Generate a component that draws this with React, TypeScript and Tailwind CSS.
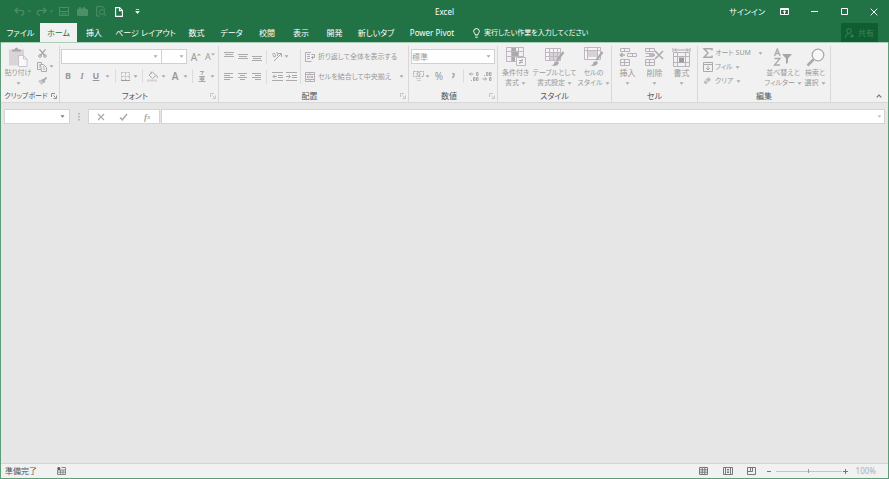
import type { ReactNode } from "react";

type BoxProps = { className?: string; children?: ReactNode };

function Icon({ w, h, className = "", children }: BoxProps & { w: number; h: number }) {
  return (
    <svg
      width={w}
      height={h}
      viewBox={`0 0 ${w} ${h}`}
      fill="none"
      stroke="currentColor"
      strokeWidth="1"
      className={`shrink-0 ${className}`}
      aria-hidden="true"
    >
      {children}
    </svg>
  );
}

function Caret({ className = "opacity-70" }: { className?: string }) {
  return (
    <Icon w={5} h={3} className={className}>
      <path d="M.5 .3h4L2.5 2.7z" fill="currentColor" stroke="none" />
    </Icon>
  );
}

function Tool({ label, className = "", children }: BoxProps & { label: string }) {
  return (
    <button type="button" aria-label={label} className={`flex h-3.5 shrink-0 items-center justify-center ${className}`}>
      {children}
    </button>
  );
}

function Rule({ className = "h-3.5" }: { className?: string }) {
  return <span className={`w-px shrink-0 bg-[#dcdcdc] ${className}`} />;
}

function Group({ title, launcher, className = "", titleClass = "", children }: BoxProps & { title: string; launcher?: string; titleClass?: string }) {
  return (
    <section aria-label={title} className={`flex shrink-0 flex-col pt-[3px] ${className}`}>
      <div className="flex h-11 border-r border-[#d8d8d8]">{children}</div>
      <div className="flex h-3 items-center border-r border-[#d8d8d8] text-[#555]">
        <h2 className={`flex-1 text-center whitespace-nowrap ${titleClass}`}>{title}</h2>
        {launcher && (
          <button type="button" aria-label={`${title}の設定`} className={`pr-0.5 ${launcher}`}>
            <Icon w={6} h={6}>
              <path d="M.5 4V.5H4M2.5 2.5l2 2M5.5 2.5v3h-3" />
            </Icon>
          </button>
        )}
      </div>
    </section>
  );
}

function BigButton({ icon, lines, className = "" }: { icon: ReactNode; lines: string[]; className?: string }) {
  return (
    <button type="button" className={`flex shrink-0 flex-col items-center whitespace-nowrap ${className}`}>
      <span className="flex h-[22px] items-center">{icon}</span>
      <span className="leading-[10px]">{lines[0]}</span>
      <span className="flex h-[10px] items-center gap-0.5 leading-[10px]">
        {lines[1]}
        <Caret />
      </span>
    </button>
  );
}

function Lines({ d }: { d: string }) {
  return (
    <Icon w={10} h={9}>
      <path d={d} />
    </Icon>
  );
}

const tabs = [
  { name: "挿入", width: "w-[34px]" },
  { name: "ページ レイアウト", width: "w-[69px]" },
  { name: "数式", width: "w-[33px]" },
  { name: "データ", width: "w-[37px]" },
  { name: "校閲", width: "w-[34px]" },
  { name: "表示", width: "w-[34px]" },
  { name: "開発", width: "w-[33px]" },
  { name: "新しいタブ", width: "w-[50px]" },
  { name: "Power Pivot", width: "w-[62px]" },
];

function TitleBar() {
  return (
    <header className="grid h-[23px] grid-cols-[1fr_auto_1fr] items-center text-white">
      <div className="flex items-center text-[#4d8f6b]">
        <Tool label="元に戻す" className="ml-2.5 w-4">
          <Icon w={11} h={9}>
            <path d="M4 .8 1 3.5 4 6.200M1.200 3.500H7.500Q10 3.700 9.800 5.800 9.500 8 7 8.400" strokeWidth="1.200" />
          </Icon>
        </Tool>
        <Caret />
        <Tool label="やり直し" className="ml-px w-4">
          <Icon w={11} h={9}>
            <path d="M7 .8 10 3.500 7 6.200M9.800 3.500H3.500Q1 3.700 1.200 5.800 1.500 8 4 8.400" strokeWidth="1.200" />
          </Icon>
        </Tool>
        <Caret />
        <Tool label="上書き保存" className="ml-0.5 w-4">
          <Icon w={10} h={9}>
            <path d="M.5.5h9v8h-9zM1 4.500h8M3 8.500v-2h4v2" />
          </Icon>
        </Tool>
        <Tool label="開く" className="ml-0.5 w-4">
          <Icon w={11} h={9}>
            <path d="M.5 2.500h10v6H.5zM2 2V.8h2V2M6 2V.8h2V2" fill="currentColor" />
          </Icon>
        </Tool>
        <Tool label="印刷プレビュー" className="ml-[3px] w-4">
          <Icon w={11} h={11}>
            <path d="M4 10H.7V.6h5.800l2 2v1M8 8l2.500 2.500" />
            <circle cx="6" cy="6" r="2.500" />
          </Icon>
        </Tool>
        <Tool label="新規作成" className="ml-0.5 w-4 text-white">
          <Icon w={8} h={10}>
            <path d="M.6.6h4L7.400 3.400v6H.6zM4.500.6v3h3" strokeWidth="1.100" />
          </Icon>
        </Tool>
        <Tool label="クイック アクセス ツール バーのカスタマイズ" className="ml-0.5 w-4 text-white">
          <Icon w={5} h={5}>
            <path d="M.8.5h3.400M.7 2.500h3.600L2.500 4.500z" fill="currentColor" strokeWidth=".7" />
          </Icon>
        </Tool>
      </div>
      <h1>Excel</h1>
      <div className="flex items-center justify-end">
        <button type="button" className="mr-1 whitespace-nowrap">サインイン</button>
        <Tool label="リボンの表示オプション" className="w-[30px]">
          <Icon w={9} h={7}>
            <path d="M.5.5h8v6h-8zM.5 1.500h8M4.500 6V3M3 4.200 4.500 2.800 6 4.200" />
          </Icon>
        </Tool>
        <Tool label="最小化" className="w-[30px]">
          <Icon w={7} h={7}><path d="M0 3.500h7" /></Icon>
        </Tool>
        <Tool label="元のサイズに戻す" className="w-[30px]">
          <Icon w={7} h={7}><path d="M.5.5h6v6h-6z" /></Icon>
        </Tool>
        <Tool label="閉じる" className="w-[29px]">
          <Icon w={8} h={8}><path d="m.7.7 6.600 6.600m0-6.600L.7 7.300" /></Icon>
        </Tool>
      </div>
    </header>
  );
}

function TabStrip() {
  return (
    <nav className="flex h-[19px] items-stretch text-white">
      <button type="button" className="w-[39px] shrink-0 whitespace-nowrap">ファイル</button>
      <button type="button" className="w-[37px] shrink-0 bg-[#f1f1f1] whitespace-nowrap text-[#217346]">ホーム</button>
      {tabs.map((tab) => (
        <button key={tab.name} type="button" className={`shrink-0 whitespace-nowrap ${tab.width}`}>
          {tab.name}
        </button>
      ))}
      <button type="button" className="ml-2.5 flex shrink-0 items-center gap-1 text-[7px] whitespace-nowrap">
        <Icon w={7} h={10}>
          <path d="M2.200 7V5.800Q.6 4.700.6 3.300.8.6 3.500.6q2.700 0 2.900 2.700 0 1.400-1.600 2.500V7zM2.300 9.200h2.400" />
        </Icon>
        実行したい作業を入力してください
      </button>
      <button type="button" className="mr-2.5 ml-auto flex w-[37px] items-center justify-center gap-1 bg-[#0f5e32] text-[#3f8059]">
        <Icon w={9} h={10}>
          <circle cx="4" cy="3" r="2.400" />
          <path d="M.6 9.500Q.6 6 3.500 5.700M5 8h4M7 6v4" />
        </Icon>
        共有
      </button>
    </nav>
  );
}

function ClipboardGroup() {
  return (
    <Group title="クリップボード" launcher="text-[#777]" titleClass="text-[7px]" className="w-[59px]">
      <BigButton
        className="w-[34px] text-[7px]"
        lines={["貼り付け", ""]}
        icon={
          <Icon w={20} h={20}>
            <path d="M1 2.500h15v16H1z" fill="#d3cdd3" stroke="none" />
            <path d="M4 4.500v-2h2.500Q7 .5 8.500.5t2 2H13v2z" fill="#999" stroke="none" />
            <path d="M10.500 8.500h5l3.500 3.500v7.500h-8.500z" fill="#fafafa" stroke="#c2b8c7" />
            <path d="M15.500 8.500V12H19" stroke="#c2b8c7" />
          </Icon>
        }
      />
      <div className="flex w-3.5 flex-col items-center">
        <Tool label="切り取り" className="w-3.5 text-[#8c8c8c]">
          <Icon w={9} h={9}>
            <path d="m1.500.3 5 6M7.500.3l-5 6" strokeWidth="1.200" />
            <circle cx="2" cy="7" r="1.300" />
            <circle cx="7" cy="7" r="1.300" />
          </Icon>
        </Tool>
        <Tool label="コピー" className="w-3.5">
          <Icon w={10} h={10}>
            <path d="M4 7.500H.5v-7h4v2M3.500 2.500h3l3 3v4h-5zM6 5h1.500M6 7h2M2 3h1M2 5h1" />
          </Icon>
        </Tool>
        <Tool label="書式のコピー" className="w-3.5">
          <Icon w={10} h={9}>
            <path d="m1 4 3-1.500L7 5.500 4.500 8z" fill="#c2bcc2" stroke="none" />
            <path d="m5 2.500 2.800 2.800M6.500 3.500 9.500.5" strokeWidth="1.800" />
          </Icon>
        </Tool>
      </div>
      <Caret className="mt-[19px] opacity-70" />
    </Group>
  );
}

function FontGroup() {
  return (
    <Group title="フォント" launcher="text-[#bbb]" className="w-[159px]">
      <div className="flex flex-col gap-[5px] pt-[3px] pl-px">
        <div className="flex items-center">
          <div className="flex h-[15px] w-[101px] items-center border border-[#d0d0d0] bg-white pr-[3px]">
            <input aria-label="フォント名" className="w-0 flex-1" />
            <Caret />
          </div>
          <div className="flex h-[15px] w-[25px] items-center border border-l-0 border-[#d0d0d0] bg-white pr-0.5">
            <input aria-label="フォント サイズ" className="w-0 flex-1" />
            <Caret />
          </div>
          <Tool label="フォント サイズの拡大" className="ml-0.5 w-3.5 text-[10px]">
            A<Icon w={4} h={8}><path d="M0 2.500 2 .5l2 2z" fill="currentColor" stroke="none" /></Icon>
          </Tool>
          <Tool label="フォント サイズの縮小" className="w-3.5 text-[9px]">
            A<Icon w={4} h={8}><path d="M0 .5h4l-2 2z" fill="currentColor" stroke="none" /></Icon>
          </Tool>
        </div>
        <div className="flex items-center text-[9px]">
          <Tool label="太字" className="w-3.5 font-bold">B</Tool>
          <Tool label="斜体" className="w-3.5 font-['Liberation_Serif',serif] font-bold italic">I</Tool>
          <Tool label="下線" className="w-3.5 font-bold underline">U</Tool>
          <Caret className="ml-0.5 opacity-70" />
          <Rule className="mr-1 ml-[5px] h-3.5" />
          <Tool label="罫線" className="w-2.5 text-[#b3a8b6]">
            <Icon w={9} h={9}>
              <path d="M.5.5h8v8h-8zM4.500.5v8M.5 4.500h8" strokeDasharray="2 1" />
              <path d="M0 8.500h9" stroke="#888" />
            </Icon>
          </Tool>
          <Caret className="ml-[3px] opacity-70" />
          <Rule className="mx-1 h-3.5" />
          <Tool label="塗りつぶしの色" className="w-3">
            <Icon w={12} h={11}>
              <path d="m2 4 3.500-3L9 4.500 5.500 7.500zM4 3V.5M9 4q2 1 1.500 3" />
              <path d="M0 9.500h10" stroke="#d0cbd0" strokeWidth="2" />
            </Icon>
          </Tool>
          <Caret className="ml-0.5 opacity-70" />
          <Tool label="フォントの色" className="ml-[3px] w-3 text-[10px] font-semibold">A</Tool>
          <Caret className="ml-0.5 opacity-70" />
          <Rule className="mx-1 h-3.5" />
          <Tool label="ふりがなの表示" className="w-2.5">
            <Icon w={8} h={11}>
              <path d="M2 .5h4L4 2v2M1 5.500h6M2 7h4v1.500H2zM3.500 5.500v5M5 5.500v5M.5 10.500h7" />
            </Icon>
          </Tool>
          <Caret className="ml-[3px] opacity-70" />
        </div>
      </div>
    </Group>
  );
}

function AlignmentGroup() {
  return (
    <Group title="配置" launcher="text-[#bbb]" className="w-[190px]">
      <div className="flex w-[81px] flex-col gap-[5px] pt-[3px] pl-[3px]">
        <div className="flex h-[15px] items-center">
          <Tool label="上揃え" className="w-3.5"><Lines d="M0 .5h10M1 2.500h8M0 4.500h10" /></Tool>
          <Tool label="上下中央揃え" className="w-3.5"><Lines d="M0 2.500h10M1 4.500h8M0 6.500h10" /></Tool>
          <Tool label="下揃え" className="w-3.5"><Lines d="M0 4.500h10M1 6.500h8M0 8.500h10" /></Tool>
          <Rule className="mr-[3px] ml-0.5 h-3.5" />
          <Tool label="方向" className="w-3.5">
            <Icon w={12} h={11}>
              <path d="m3 10 7-7M7 2.500h3.500V6" />
              <path d="M1 3.500 3 2l2 3-2 1-1-2M5.500 1 7 4l-1 1" />
            </Icon>
          </Tool>
          <Caret />
        </div>
        <div className="flex h-[15px] items-center">
          <Tool label="左揃え" className="w-3.5"><Lines d="M0 1.500h9M0 3.500h6M0 5.500h9M0 7.500h6" /></Tool>
          <Tool label="中央揃え" className="w-3.5"><Lines d="M0 1.500h9M2 3.500h5M0 5.500h9M2 7.500h5" /></Tool>
          <Tool label="右揃え" className="w-3.5"><Lines d="M0 1.500h9M3 3.500h6M0 5.500h9M3 7.500h6" /></Tool>
          <Rule className="mr-[3px] ml-0.5 h-3.5" />
          <Tool label="インデントを減らす" className="w-3.5">
            <Icon w={11} h={9}><path d="M0 .5h11M6 3.500h5M6 5.500h5M0 8.500h11M1 4.500h4M3 2.500l-2 2 2 2" /></Icon>
          </Tool>
          <Tool label="インデントを増やす" className="w-3.5">
            <Icon w={11} h={9}><path d="M0 .5h11M6 3.500h5M6 5.500h5M0 8.500h11M0 4.500h4M2.500 2.500l2 2-2 2" /></Icon>
          </Tool>
        </div>
      </div>
      <Rule className="mt-[3px] h-[35px]" />
      <div className="flex flex-1 flex-col gap-[5px] pt-[3px] pl-1 text-[7px]">
        <button type="button" className="flex h-[15px] items-center gap-0.5 whitespace-nowrap">
          <Icon w={11} h={10}>
            <path d="M6 .5H.5v9h6M2 2.500h3M2 4.500h3M2 6.500h3" stroke="#a99dab" />
            <path d="M6.500 2.500h3v3h-3M8 4 6.500 5.500 8 7" />
          </Icon>
          折り返して全体を表示する
        </button>
        <div className="flex h-[15px] items-center">
          <button type="button" className="flex items-center gap-0.5 whitespace-nowrap">
            <Icon w={11} h={10}>
              <path d="M.5.500h9v9h-9zM.5 2.500h9M.5 7.500h9M5 .5v2M5 7.500v2" stroke="#a99dab" />
              <path d="M2 5h6M3.500 4 2 5l1.500 1M6.500 4 8 5 6.500 6" />
            </Icon>
            セルを結合して中央揃え
          </button>
          <Caret className="mr-1 ml-auto opacity-70" />
        </div>
      </div>
    </Group>
  );
}

function NumberGroup() {
  return (
    <Group title="数値" launcher="text-[#bbb]" className="w-[89px]">
      <div className="flex flex-1 flex-col gap-[5px] px-0.5 pt-[3px]">
        <div className="flex h-[15px] items-center border border-[#d0d0d0] bg-white pr-[3px]">
          <select aria-label="数値の書式" className="h-full w-0 flex-1 appearance-none">
            <option>標準</option>
          </select>
          <Caret />
        </div>
        <div className="flex items-center">
          <Tool label="通貨表示形式" className="w-3.5">
            <Icon w={11} h={10}>
              <path d="M.5.5h10v5H.5z" strokeDasharray="2 1" />
              <circle cx="5.500" cy="3" r="1.500" />
              <path d="M3 7.500h5M4 9.500h4" stroke="#c9bdcb" />
            </Icon>
          </Tool>
          <Caret />
          <Tool label="パーセント スタイル" className="ml-0.5 w-3.5 text-[10px]">%</Tool>
          <Tool label="桁区切りスタイル" className="w-3.5">
            <Icon w={4} h={7}><path d="M1 .5h2v2L1.500 5" strokeWidth="1.500" /></Icon>
          </Tool>
          <Rule className="mx-[3px] h-3.5" />
          <Tool label="小数点以下の表示桁数を増やす" className="w-[13px]">
            <Icon w={10} h={9}>
              <path d="M.5 2h4M2 .5.5 2 2 3.500M7.500.5h1.500v3H7.500zM4.500 5.500H6v3H4.500zM7.500 5.500H9v3H7.500zM2 8.500h1" />
            </Icon>
          </Tool>
          <Tool label="小数点以下の表示桁数を減らす" className="w-[13px]">
            <Icon w={10} h={9}>
              <path d="M.5 7h4M3 5.500 4.500 7 3 8.500M7.500 5.500H9v3H7.500zM4.500.5H6v3H4.500zM7.500.5H9v3H7.500zM2 3.500h1" />
            </Icon>
          </Tool>
        </div>
      </div>
    </Group>
  );
}

function StylesGroup() {
  return (
    <Group title="スタイル" className="w-[114px] text-[8px]">
      <BigButton
        className="w-[35px] text-[7px]"
        lines={["条件付き", "書式"]}
        icon={
          <Icon w={20} h={20}>
            <path d="M.5.5h17v14H.5zM.5 4.500h17M.5 9.500h17M5.500.5v14M12.500.5v14" stroke="#b5a9b8" />
            <path d="M6 1h4v3H6zM6 5h6v4H6zM6 10h3v4H6z" fill="#999" stroke="none" />
            <path d="M10.500 10.500h9v8h-9z" fill="#f7f7f7" stroke="#b5a9b8" />
            <path d="M13 13.500h4M13 15.500h4M16.500 12l-3 5" />
          </Icon>
        }
      />
      <BigButton
        className="w-[43px] text-[7px]"
        lines={["テーブルとして", "書式設定"]}
        icon={
          <Icon w={20} h={20}>
            <path d="M.5 1.500h15v12H.5z" stroke="#b5a9b8" fill="#f7f7f7" />
            <path d="M4 5h11v8H4z" fill="#d0cbd0" stroke="none" />
            <path d="M.5 5.500h15M.5 9.500h15M4.500 1.500v12M8.500 1.500v12M12.500 1.500v12" stroke="#b5a9b8" />
            <path d="m18.500 5-6 8" strokeWidth="2.200" />
            <path d="M6 18.500q3 0 3.500-3.500l3-1 1.500 2q-2 4-8 2.500z" fill="#999" stroke="none" />
          </Icon>
        }
      />
      <BigButton
        className="w-[35px] text-[7px]"
        lines={["セルの", "スタイル"]}
        icon={
          <Icon w={20} h={20}>
            <path d="M.5.5h16v12H.5z" stroke="#b5a9b8" fill="#f7f7f7" />
            <path d="M4 4h9v6H4z" fill="#d0cbd0" stroke="none" />
            <path d="M.5 3.500h16M3.500.5v12M13.500.5v12" stroke="#b5a9b8" />
            <path d="m18.500 5-6 8" strokeWidth="2.200" />
            <path d="M6 18.500q3 0 3.500-3.500l3-1 1.500 2q-2 4-8 2.500z" fill="#999" stroke="none" />
          </Icon>
        }
      />
    </Group>
  );
}

function CellsGroup() {
  return (
    <Group title="セル" className="w-[86px]">
      <BigButton
        className="ml-0.5 w-[27px]"
        lines={["挿入", ""]}
        icon={
          <Icon w={18} h={18}>
            <path d="M1.500.5h9v3h-9zM5.500.5v3M1.500 11.500h9v6h-9zM5.500 11.500v6M1.500 14.500h9M8.500 5.500h9v3h-9zM13.500 5.500v3" stroke="#aca2ae" />
            <path d="M1 7h5M3.500 5 1.200 7l2.300 2" strokeWidth="1.300" />
          </Icon>
        }
      />
      <BigButton
        className="w-[27px]"
        lines={["削除", ""]}
        icon={
          <Icon w={19} h={18}>
            <path d="M.5.500h9v3h-9zM4.500.5v3M.5 11.500h9v6h-9zM4.500 11.500v6M.5 14.500h9M.5 5.500h8v3h-8" stroke="#aca2ae" />
            <path d="M4 7h6M10 3l8 8M18 3l-8 8" strokeWidth="1.500" />
          </Icon>
        }
      />
      <BigButton
        className="w-[27px]"
        lines={["書式", ""]}
        icon={
          <Icon w={19} h={19}>
            <path d="M1.500 4.500h16v14h-16zM5.500 4.500v14M13.500 4.500v14M1.500 8.500h16M1.500 14.500h16" stroke="#aca2ae" />
            <path d="M7 9.500h5v5H7z" fill="#888" stroke="none" />
            <path d="M2.500 2h14M4.500.5 2.500 2l2 1.500M14.500.5l2 1.500-2 1.500M1 0v4M18 0v4" />
          </Icon>
        }
      />
    </Group>
  );
}

function EditingGroup() {
  return (
    <Group title="編集" className="w-[133px]">
      <div className="flex w-[67px] flex-col pl-[5px] text-[7px]">
        <button type="button" className="flex h-3.5 items-center gap-0.5 whitespace-nowrap">
          <Icon w={10} h={10}><path d="M9 2.500V.8H1L5 5 1 9.200h8V7.500" strokeWidth="1.500" /></Icon>
          オート SUM
          <Caret className="mr-0.5 ml-auto opacity-70" />
        </button>
        <button type="button" className="flex h-3.5 items-center gap-0.5 whitespace-nowrap">
          <Icon w={10} h={10}><path d="M.5.5h9v9h-9zM.5 2.500h9M5 3.500V8M3 6l2 2 2-2" /></Icon>
          フィル
          <Caret />
        </button>
        <button type="button" className="flex h-3.5 items-center gap-0.5 whitespace-nowrap">
          <Icon w={10} h={10}>
            <path d="M1 5.500 5.500 1 8 3.500 3.500 8H2L.8 6.800z" fill="#b6afb6" stroke="none" />
            <path d="m2.500 4 3 3" stroke="#f1f1f1" />
          </Icon>
          クリア
          <Caret />
        </button>
      </div>
      <BigButton
        className="w-[36px] text-[7px]"
        lines={["並べ替えと", "フィルター"]}
        icon={
          <Icon w={20} h={18}>
            <path d="m1.500 8 2.800-7 2.800 7M2.500 5.500h3.600M1.500 10.500H7L1.500 17H7" strokeWidth="1.300" />
            <path d="M9 6h10l-4 4.500v4l-2 1.500v-5.500z" fill="#959595" stroke="none" />
          </Icon>
        }
      />
      <BigButton
        className="w-[28px] text-[7px]"
        lines={["検索と", "選択"]}
        icon={
          <Icon w={19} h={19}>
            <circle cx="12" cy="7" r="5.800" strokeWidth="1.300" fill="#faf8fa" />
            <path d="m7.500 11.500-6 6" strokeWidth="2.500" />
          </Icon>
        }
      />
    </Group>
  );
}

function FormulaBar() {
  return (
    <div className="flex items-center border-t border-[#d8d8d8] pt-1.5 pr-[3px] pl-[3px] text-[#aaa]">
      <div className="flex h-[15px] w-[66px] items-center border border-[#d4d4d4] bg-white pr-1">
        <input aria-label="名前ボックス" className="w-0 flex-1" />
        <Caret className="text-[#777]" />
      </div>
      <span className="flex w-[18px] justify-center">
        <Icon w={2} h={8}><path d="M1 0v1.500M1 3v1.500M1 6v1.500" strokeWidth="1.500" /></Icon>
      </span>
      <div className="flex h-[15px] w-[72px] items-center justify-around border border-[#d4d4d4] bg-white">
        <Tool label="キャンセル" className="w-4">
          <Icon w={8} h={8}><path d="m1 1 6 6M7 1 1 7" strokeWidth="1.200" /></Icon>
        </Tool>
        <Tool label="入力" className="w-4">
          <Icon w={9} h={8}><path d="m1 4.500 2.300 2.300L8 1" strokeWidth="1.500" /></Icon>
        </Tool>
        <Tool label="関数の挿入" className="w-4 font-['Liberation_Serif',serif] text-[9px] font-bold italic">
          f<span className="text-[7px]">x</span>
        </Tool>
      </div>
      <div className="ml-px flex h-[15px] flex-1 items-center border border-[#d4d4d4] bg-white pr-0.5">
        <input aria-label="数式バー" className="w-0 flex-1" />
        <Caret />
      </div>
    </div>
  );
}

function StatusBar() {
  return (
    <footer className="flex h-[15px] items-center border-t border-[#d4d4d4] bg-[#f1f1f1] pr-3 pl-1 text-[#555]">
      <span>準備完了</span>
      <Tool label="マクロの記録" className="ml-4 w-4 text-[#888]">
        <Icon w={9} h={8}>
          <path d="M.5 3v4.500h8v-7h-4M3.500 3v4M6 3v4M1 5.200h7M1 3h7" />
          <circle cx="1.800" cy="1.500" r="1.500" fill="#555" stroke="none" />
        </Icon>
      </Tool>
      <div className="ml-auto flex items-center text-[#777]">
        <Tool label="標準" className="w-6">
          <Icon w={9} h={8}><path d="M.5.5h8v7h-8zM.5 2.800h8M.5 5.200h8M3.200.5v7M5.800.5v7" /></Icon>
        </Tool>
        <Tool label="ページ レイアウト表示" className="w-6">
          <Icon w={10} h={8}><path d="M.5.5h9v7h-9zM2.500.500v7M7.500.5v7M4 2.500h2M4 4h2M4 5.500h2" /></Icon>
        </Tool>
        <Tool label="改ページ プレビュー" className="w-6">
          <Icon w={9} h={8}><path d="M.5.5h8v7h-8zM3.500.5v4h-3M5.500.5v4h-2" /></Icon>
        </Tool>
        <Tool label="縮小" className="w-3"><Icon w={5} h={5}><path d="M0 2.500h4" /></Icon></Tool>
        <input
          type="range"
          aria-label="ズーム"
          min="10"
          max="190"
          defaultValue="100"
          className="h-px w-[66px] appearance-none bg-[#c4c4c4] [&::-webkit-slider-thumb]:h-1 [&::-webkit-slider-thumb]:w-px [&::-webkit-slider-thumb]:appearance-none [&::-webkit-slider-thumb]:bg-[#999]"
        />
        <Tool label="拡大" className="w-2"><Icon w={5} h={5}><path d="M0 2.500h5M2.500 0v5" /></Icon></Tool>
        <output className="ml-1.5 text-[#b0b0b0]">100%</output>
      </div>
    </footer>
  );
}

export default function App() {
  return (
    <div className="flex min-h-screen flex-col border border-t-0 border-[#5f9c79] bg-[#e6e6e6] font-['Noto_Sans','Noto_Sans_CJK_JP',sans-serif] text-[8px] leading-[10px] [font-feature-settings:'palt']">
      <div className="-mx-px bg-[#217346] px-px">
        <TitleBar />
        <TabStrip />
      </div>
      <div className="flex h-[60px] border-t border-[#a8cdb8] bg-[#f1f1f1] text-[#999] [&_svg]:opacity-80">
        <ClipboardGroup />
        <FontGroup />
        <AlignmentGroup />
        <NumberGroup />
        <StylesGroup />
        <CellsGroup />
        <EditingGroup />
        <button type="button" aria-label="リボンを折りたたむ" className="mt-auto mr-1.5 mb-1 ml-auto text-[#555]">
          <Icon w={6} h={4}><path d="m.7 3.300 2.300-2.300 2.300 2.300" strokeWidth="1.200" /></Icon>
        </button>
      </div>
      <FormulaBar />
      <main className="flex-1" />
      <StatusBar />
    </div>
  );
}
